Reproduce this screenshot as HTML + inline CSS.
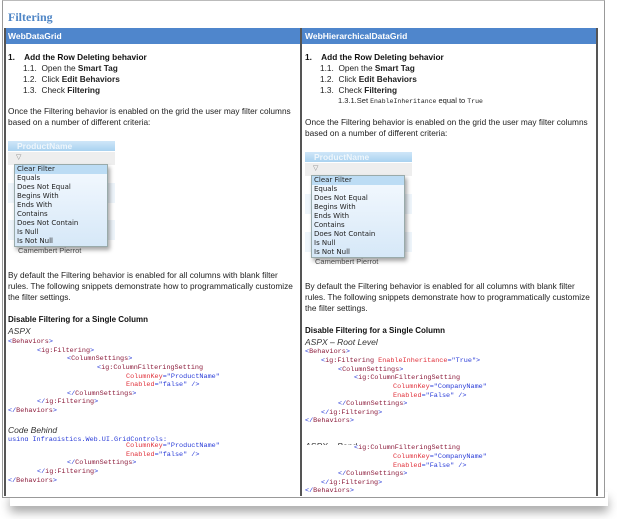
<!DOCTYPE html>
<html><head><meta charset="utf-8">
<style>
html,body{margin:0;padding:0;background:#fff;width:617px;height:519px;overflow:hidden;position:relative;font-family:"Liberation Sans",sans-serif;}
.a{position:absolute;white-space:nowrap;}
.t{font-size:8.3px;color:#222;}
.b{font-weight:bold;color:#111;}
.c{font-family:"Liberation Mono",monospace;font-size:6.8px;color:#8b1a3a;}
.bl{color:#2a3cd8;}
.rd{color:#e0303a;}
.it{font-style:italic;color:#333;font-size:8.5px;}
.dd{position:absolute;background:linear-gradient(#f4f9fe,#d6e8f8);border:1px solid #9aa;box-shadow:2px 3px 4px rgba(0,0,0,.35);}
.dd div{font-family:"DejaVu Sans",sans-serif;font-size:7px;color:#222;height:9px;line-height:9px;padding-left:2px;}
.h{font-size:8px;}
</style></head><body>
<div class="a" style="left:10px;top:492px;width:598px;height:14px;box-shadow:0 6px 10px rgba(0,0,0,.35);background:#fff;"></div>
<div class="a" style="left:2px;top:0;width:601px;height:496px;border:1px solid #999;border-top:1px solid #bbb;background:#fff;"></div>
<div class="a" style="left:8px;top:10px;font-family:'Liberation Serif',serif;font-weight:bold;font-size:12px;color:#4f86c6;">Filtering</div>
<div class="a" style="left:4px;top:28px;width:594px;height:16px;background:#4f86cc;"></div>
<div class="a" style="left:4px;top:28px;width:594px;height:468px;border-left:2px solid #555;border-right:2px solid #555;box-sizing:border-box;"></div>
<div class="a" style="left:300px;top:28px;width:2px;height:468px;background:#555;"></div>
<div class="a" style="left:8px;top:31px;font-size:8.5px;font-weight:bold;color:#fff;">WebDataGrid</div>
<div class="a" style="left:305px;top:31px;font-size:8.5px;font-weight:bold;color:#fff;">WebHierarchicalDataGrid</div>

<!-- LEFT -->
<div class="a t b" style="left:8px;top:52px;">1.&nbsp;&nbsp;&nbsp;&nbsp;Add the Row Deleting behavior</div>
<div class="a t" style="left:23px;top:63px;">1.1.&nbsp; Open the <b>Smart Tag</b></div>
<div class="a t" style="left:23px;top:74px;">1.2.&nbsp; Click <b>Edit Behaviors</b></div>
<div class="a t" style="left:23px;top:85px;">1.3.&nbsp; Check <b>Filtering</b></div>
<div class="a t" style="left:8px;top:106px;">Once the Filtering behavior is enabled on the grid the user may filter columns</div>
<div class="a t" style="left:8px;top:117px;">based on a number of different criteria:</div>
<div class="a" style="left:8px;top:141px;width:107px;height:10px;background:linear-gradient(#cfe6f8,#a9d2f0);"></div>
<div class="a" style="left:17px;top:141px;font-size:8.5px;font-weight:bold;color:#eef6fc;">ProductName</div>
<div class="a" style="left:8px;top:152px;width:107px;height:13px;background:#eee;"></div>
<div class="a" style="left:16px;top:153px;font-size:7px;color:#888;">▽</div>
<div class="a" style="left:8px;top:183px;width:107px;height:20px;background:#eef5fb;"></div>
<div class="a" style="left:8px;top:220px;width:107px;height:20px;background:#eef5fb;"></div>
<div class="a" style="left:18px;top:246px;font-size:7.5px;color:#555;">Camembert Pierrot</div>
<div class="dd" style="left:14px;top:164px;width:92px;height:81px;">
<div style="background:#bcdcf4;">Clear Filter</div><div>Equals</div><div>Does Not Equal</div><div>Begins With</div><div>Ends With</div><div>Contains</div><div>Does Not Contain</div><div>Is Null</div><div>Is Not Null</div></div>

<div class="a t" style="left:8px;top:270px;">By default the Filtering behavior is enabled for all columns with blank filter</div>
<div class="a t" style="left:8px;top:281px;">rules. The following snippets demonstrate how to programmatically customize</div>
<div class="a t" style="left:8px;top:292px;">the filter settings.</div>
<div class="a b h" style="left:8px;top:315px;">Disable Filtering for a Single Column</div>
<div class="a it" style="left:8px;top:326px;">ASPX</div>
<div class="a c" style="left:8px;top:338px;"><span class="bl">&lt;</span>Behaviors<span class="bl">&gt;</span></div>
<div class="a c" style="left:37px;top:347px;"><span class="bl">&lt;</span>ig:Filtering<span class="bl">&gt;</span></div>
<div class="a c" style="left:67px;top:355px;"><span class="bl">&lt;</span>ColumnSettings<span class="bl">&gt;</span></div>
<div class="a c" style="left:97px;top:364px;"><span class="bl">&lt;</span>ig:ColumnFilteringSetting</div>
<div class="a c" style="left:126px;top:373px;"><span class="rd">ColumnKey</span><span class="bl">="ProductName"</span></div>
<div class="a c" style="left:126px;top:381px;"><span class="rd">Enabled</span><span class="bl">="false" /&gt;</span></div>
<div class="a c" style="left:67px;top:390px;"><span class="bl">&lt;/</span>ColumnSettings<span class="bl">&gt;</span></div>
<div class="a c" style="left:37px;top:398px;"><span class="bl">&lt;/</span>ig:Filtering<span class="bl">&gt;</span></div>
<div class="a c" style="left:8px;top:407px;"><span class="bl">&lt;/</span>Behaviors<span class="bl">&gt;</span></div>
<div class="a it" style="left:8px;top:425px;">Code Behind</div>
<div class="a c" style="left:8px;top:436px;height:5px;overflow:hidden;color:#2a3cd8;">using Infragistics.Web.UI.GridControls;</div>
<div class="a c" style="left:126px;top:442px;"><span class="rd">ColumnKey</span><span class="bl">="ProductName"</span></div>
<div class="a c" style="left:126px;top:451px;"><span class="rd">Enabled</span><span class="bl">="false" /&gt;</span></div>
<div class="a c" style="left:67px;top:459px;"><span class="bl">&lt;/</span>ColumnSettings<span class="bl">&gt;</span></div>
<div class="a c" style="left:37px;top:468px;"><span class="bl">&lt;/</span>ig:Filtering<span class="bl">&gt;</span></div>
<div class="a c" style="left:8px;top:477px;"><span class="bl">&lt;/</span>Behaviors<span class="bl">&gt;</span></div>

<!-- RIGHT -->
<div class="a t b" style="left:305px;top:52px;">1.&nbsp;&nbsp;&nbsp;&nbsp;Add the Row Deleting behavior</div>
<div class="a t" style="left:320px;top:63px;">1.1.&nbsp; Open the <b>Smart Tag</b></div>
<div class="a t" style="left:320px;top:74px;">1.2.&nbsp; Click <b>Edit Behaviors</b></div>
<div class="a t" style="left:320px;top:85px;">1.3.&nbsp; Check <b>Filtering</b></div>
<div class="a t" style="left:338px;top:96px;font-size:7.5px;">1.3.1.Set <span style="font-family:'Liberation Mono',monospace;font-size:6.5px;">EnableInheritance</span> equal to <span style="font-family:'Liberation Mono',monospace;font-size:6.5px;">True</span></div>
<div class="a t" style="left:305px;top:117px;">Once the Filtering behavior is enabled on the grid the user may filter columns</div>
<div class="a t" style="left:305px;top:128px;">based on a number of different criteria:</div>
<div class="a" style="left:305px;top:152px;width:107px;height:10px;background:linear-gradient(#cfe6f8,#a9d2f0);"></div>
<div class="a" style="left:314px;top:152px;font-size:8.5px;font-weight:bold;color:#eef6fc;">ProductName</div>
<div class="a" style="left:305px;top:163px;width:107px;height:13px;background:#eee;"></div>
<div class="a" style="left:313px;top:164px;font-size:7px;color:#888;">▽</div>
<div class="a" style="left:305px;top:194px;width:107px;height:20px;background:#eef5fb;"></div>
<div class="a" style="left:305px;top:232px;width:107px;height:20px;background:#eef5fb;"></div>
<div class="a" style="left:315px;top:257px;font-size:7.5px;color:#555;">Camembert Pierrot</div>
<div class="dd" style="left:311px;top:175px;width:92px;height:81px;">
<div style="background:#bcdcf4;">Clear Filter</div><div>Equals</div><div>Does Not Equal</div><div>Begins With</div><div>Ends With</div><div>Contains</div><div>Does Not Contain</div><div>Is Null</div><div>Is Not Null</div></div>

<div class="a t" style="left:305px;top:281px;">By default the Filtering behavior is enabled for all columns with blank filter</div>
<div class="a t" style="left:305px;top:292px;">rules. The following snippets demonstrate how to programmatically customize</div>
<div class="a t" style="left:305px;top:303px;">the filter settings.</div>
<div class="a b h" style="left:305px;top:326px;">Disable Filtering for a Single Column</div>
<div class="a it" style="left:305px;top:337px;">ASPX – Root Level</div>
<div class="a c" style="left:305px;top:348px;"><span class="bl">&lt;</span>Behaviors<span class="bl">&gt;</span></div>
<div class="a c" style="left:321px;top:357px;"><span class="bl">&lt;</span>ig:Filtering <span class="rd">EnableInheritance</span><span class="bl">="True"&gt;</span></div>
<div class="a c" style="left:338px;top:366px;"><span class="bl">&lt;</span>ColumnSettings<span class="bl">&gt;</span></div>
<div class="a c" style="left:354px;top:374px;"><span class="bl">&lt;</span>ig:ColumnFilteringSetting</div>
<div class="a c" style="left:393px;top:383px;"><span class="rd">ColumnKey</span><span class="bl">="CompanyName"</span></div>
<div class="a c" style="left:393px;top:392px;"><span class="rd">Enabled</span><span class="bl">="False" /&gt;</span></div>
<div class="a c" style="left:338px;top:400px;"><span class="bl">&lt;/</span>ColumnSettings<span class="bl">&gt;</span></div>
<div class="a c" style="left:321px;top:409px;"><span class="bl">&lt;/</span>ig:Filtering<span class="bl">&gt;</span></div>
<div class="a c" style="left:305px;top:417px;"><span class="bl">&lt;/</span>Behaviors<span class="bl">&gt;</span></div>
<div class="a it" style="left:305px;top:441px;height:4px;overflow:hidden;">ASPX – Band</div>
<div class="a c" style="left:354px;top:444px;"><span class="bl">&lt;</span>ig:ColumnFilteringSetting</div>
<div class="a c" style="left:393px;top:453px;"><span class="rd">ColumnKey</span><span class="bl">="CompanyName"</span></div>
<div class="a c" style="left:393px;top:462px;"><span class="rd">Enabled</span><span class="bl">="False" /&gt;</span></div>
<div class="a c" style="left:338px;top:470px;"><span class="bl">&lt;/</span>ColumnSettings<span class="bl">&gt;</span></div>
<div class="a c" style="left:321px;top:479px;"><span class="bl">&lt;/</span>ig:Filtering<span class="bl">&gt;</span></div>
<div class="a c" style="left:305px;top:487px;"><span class="bl">&lt;/</span>Behaviors<span class="bl">&gt;</span></div>
</body></html>
